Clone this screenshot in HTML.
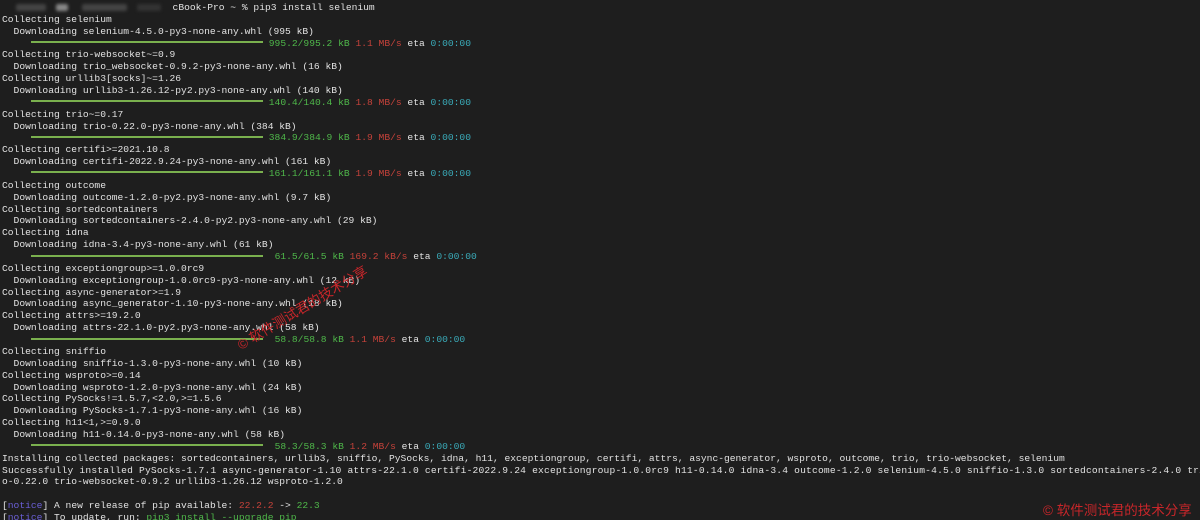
<!DOCTYPE html>
<html><head><meta charset="utf-8"><style>
html,body{margin:0;padding:0;background:#1e1e1e;width:1200px;height:520px;overflow:hidden}
pre{margin:0;padding:2px 0 0 2px;font-family:"Liberation Mono",monospace;font-size:9.65px;line-height:11.86px;color:#e2e2e2;white-space:pre}
.g{color:#4fb84a}.r{color:#c5423a}.c{color:#3aaab8}.p{color:#6a5fd6}
.b{display:inline-block;width:232px;height:2px;background:#7ab04e;vertical-align:middle;margin-left:29px;margin-top:-2px}
.blur{display:inline-block;height:7px;background:#555;vertical-align:middle;border-radius:2px;filter:blur(1.5px)}
.wm{position:absolute;color:#c8262a;font-family:"Liberation Sans","Noto Sans CJK SC",sans-serif;font-size:13.5px}
</style></head><body>
<pre><span class="blur" style="width:30px;margin-left:14px;background:#444"></span><span class="blur" style="width:12px;margin-left:10px;background:#888"></span><span class="blur" style="width:45px;margin-left:14px;background:#444"></span><span class="blur" style="width:24px;margin-left:10px;background:#333"></span>  cBook-Pro ~ % pip3 install selenium
Collecting selenium
  Downloading selenium-4.5.0-py3-none-any.whl (995 kB)
<span class="b"></span> <span class="g">995.2/995.2 kB</span> <span class="r">1.1 MB/s</span> eta <span class="c">0:00:00</span>
Collecting trio-websocket~=0.9
  Downloading trio_websocket-0.9.2-py3-none-any.whl (16 kB)
Collecting urllib3[socks]~=1.26
  Downloading urllib3-1.26.12-py2.py3-none-any.whl (140 kB)
<span class="b"></span> <span class="g">140.4/140.4 kB</span> <span class="r">1.8 MB/s</span> eta <span class="c">0:00:00</span>
Collecting trio~=0.17
  Downloading trio-0.22.0-py3-none-any.whl (384 kB)
<span class="b"></span> <span class="g">384.9/384.9 kB</span> <span class="r">1.9 MB/s</span> eta <span class="c">0:00:00</span>
Collecting certifi>=2021.10.8
  Downloading certifi-2022.9.24-py3-none-any.whl (161 kB)
<span class="b"></span> <span class="g">161.1/161.1 kB</span> <span class="r">1.9 MB/s</span> eta <span class="c">0:00:00</span>
Collecting outcome
  Downloading outcome-1.2.0-py2.py3-none-any.whl (9.7 kB)
Collecting sortedcontainers
  Downloading sortedcontainers-2.4.0-py2.py3-none-any.whl (29 kB)
Collecting idna
  Downloading idna-3.4-py3-none-any.whl (61 kB)
<span class="b"></span>  <span class="g">61.5/61.5 kB</span> <span class="r">169.2 kB/s</span> eta <span class="c">0:00:00</span>
Collecting exceptiongroup>=1.0.0rc9
  Downloading exceptiongroup-1.0.0rc9-py3-none-any.whl (12 kB)
Collecting async-generator>=1.9
  Downloading async_generator-1.10-py3-none-any.whl (18 kB)
Collecting attrs>=19.2.0
  Downloading attrs-22.1.0-py2.py3-none-any.whl (58 kB)
<span class="b"></span>  <span class="g">58.8/58.8 kB</span> <span class="r">1.1 MB/s</span> eta <span class="c">0:00:00</span>
Collecting sniffio
  Downloading sniffio-1.3.0-py3-none-any.whl (10 kB)
Collecting wsproto>=0.14
  Downloading wsproto-1.2.0-py3-none-any.whl (24 kB)
Collecting PySocks!=1.5.7,<2.0,>=1.5.6
  Downloading PySocks-1.7.1-py3-none-any.whl (16 kB)
Collecting h11<1,>=0.9.0
  Downloading h11-0.14.0-py3-none-any.whl (58 kB)
<span class="b"></span>  <span class="g">58.3/58.3 kB</span> <span class="r">1.2 MB/s</span> eta <span class="c">0:00:00</span>
Installing collected packages: sortedcontainers, urllib3, sniffio, PySocks, idna, h11, exceptiongroup, certifi, attrs, async-generator, wsproto, outcome, trio, trio-websocket, selenium
<span style="letter-spacing:0.18px">Successfully installed PySocks-1.7.1 async-generator-1.10 attrs-22.1.0 certifi-2022.9.24 exceptiongroup-1.0.0rc9 h11-0.14.0 idna-3.4 outcome-1.2.0 selenium-4.5.0 sniffio-1.3.0 sortedcontainers-2.4.0 tri</span>
o-0.22.0 trio-websocket-0.9.2 urllib3-1.26.12 wsproto-1.2.0

[<span class="p">notice</span>] A new release of pip available: <span class="r">22.2.2</span> -> <span class="g">22.3</span>
[<span class="p">notice</span>] To update, run: <span class="g">pip3 install --upgrade pip</span></pre>
<div class="wm" style="left:238px;top:335px;transform:rotate(-31deg);transform-origin:left center;white-space:nowrap">© 软件测试君的技术分享</div>
<div class="wm" style="left:1043px;top:499px;white-space:nowrap">© 软件测试君的技术分享</div>
</body></html>
